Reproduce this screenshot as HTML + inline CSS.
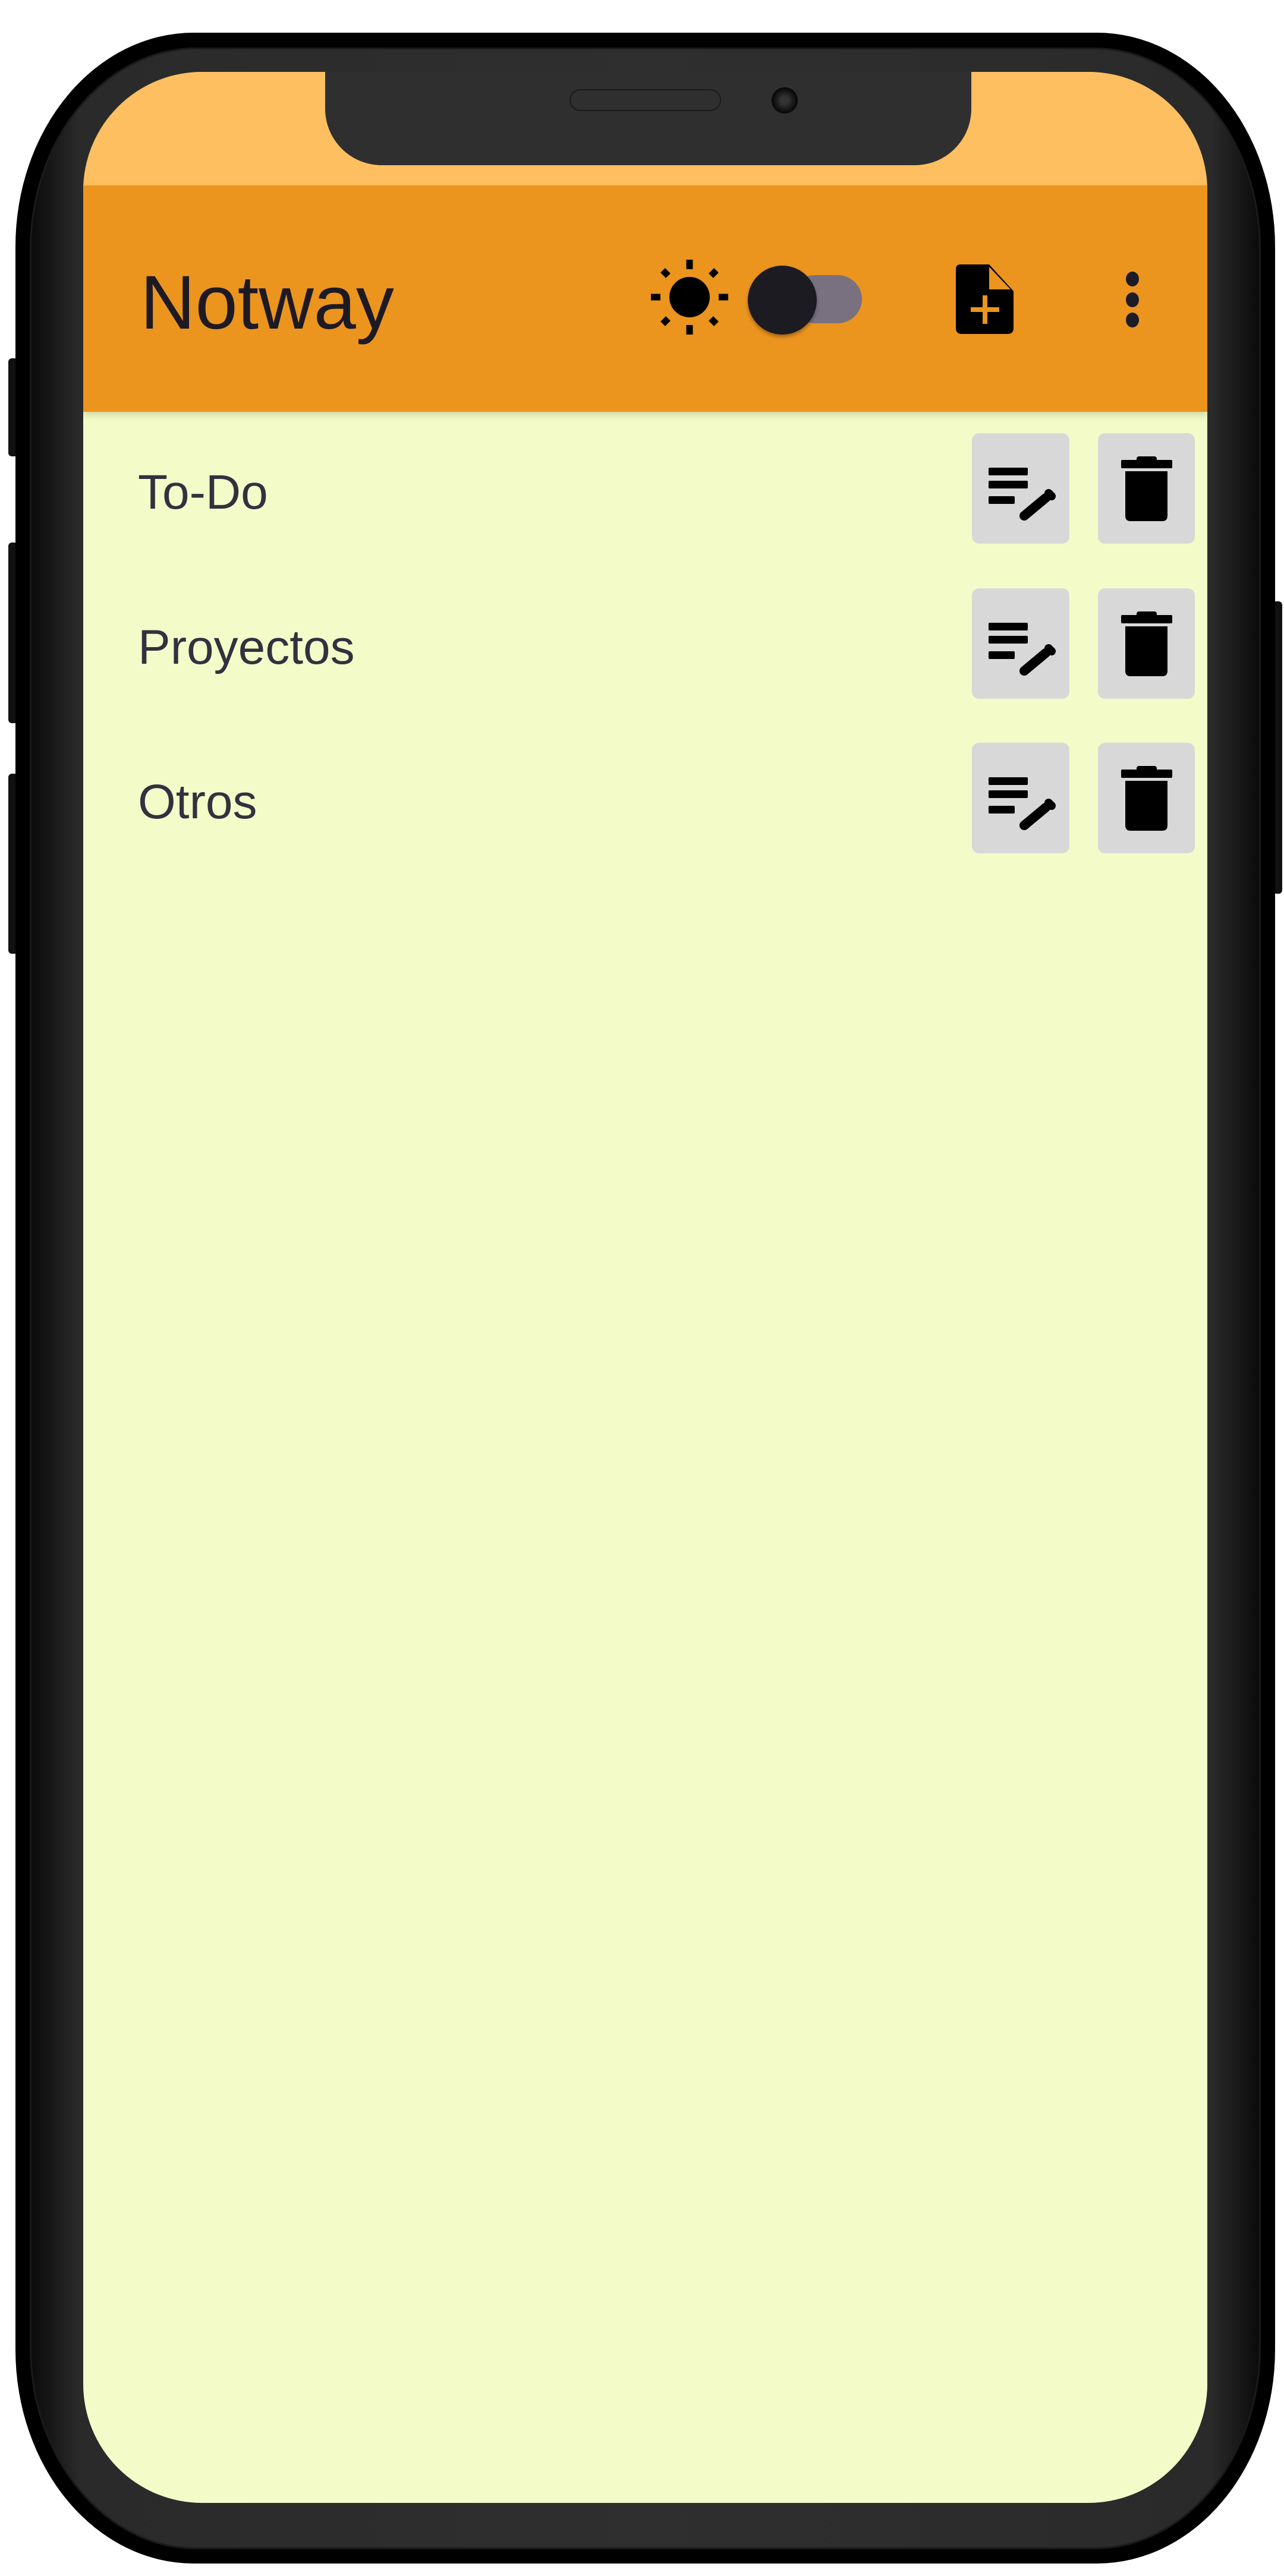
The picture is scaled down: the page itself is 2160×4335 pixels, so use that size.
<!DOCTYPE html>
<html><head><meta charset="utf-8"><style>
html,body{margin:0;padding:0;background:#fff;}
body{width:2160px;height:4335px;position:relative;overflow:hidden;font-family:"Liberation Sans",Arial,sans-serif;}
.abs{position:absolute;}
.phone{left:26px;top:55px;width:2119px;height:4259px;border-radius:300px / 360px;background:#000;}
.bezel{left:50px;top:80px;width:2071px;height:4210px;border-radius:280px / 340px;background:linear-gradient(90deg,#0a0a0a 0%,#2a2a2a 4%,#2f2f2f 50%,#2a2a2a 96%,#0a0a0a 100%);box-shadow:inset 0 0 0 3px #1a1a1a;}
.screen{left:140px;top:121px;width:1891px;height:4091px;border-radius:200px;background:#f3fcc9;overflow:hidden;}
.sb{left:0;top:0;width:1891px;height:191px;background:#fdbf5f;}
.hdr{left:0;top:191px;width:1891px;height:381px;background:#eb941e;box-shadow:0 6px 10px rgba(120,110,40,0.25);}
.notch{left:547px;top:121px;width:1087px;height:157px;background:#2f2f2f;border-radius:0 0 95px 95px;}
.sidebtn{background:#111;border-radius:6px;}
.row-t{left:232px;font-size:82px;color:#33313f;line-height:1;}
</style></head><body>
<div class="abs sidebtn" style="left:14px;top:603px;width:16px;height:165px"></div>
<div class="abs sidebtn" style="left:14px;top:913px;width:16px;height:304px"></div>
<div class="abs sidebtn" style="left:14px;top:1302px;width:16px;height:303px"></div>
<div class="abs sidebtn" style="left:2141px;top:1012px;width:16px;height:492px"></div>
<div class="abs phone"></div>
<div class="abs bezel"></div>
<div class="abs screen">
  <div class="abs sb"></div>
  <div class="abs hdr"></div>
</div>
<div class="abs notch"></div>
<div class="abs" style="left:958px;top:150px;width:251px;height:33px;border:2px solid #1a1a1a;border-radius:20px;"></div>
<div class="abs" style="left:1298px;top:147px;width:44px;height:44px;border-radius:50%;background:radial-gradient(circle,#333 20%,#050505 70%);"></div>

<div class="abs" style="left:236px;top:446px;font-size:128px;color:#1d1a24;line-height:1;">Notway</div>

<svg class="abs" style="left:1090px;top:430px" width="140" height="140" viewBox="1090 430 140 140">
  <circle cx="1160" cy="500" r="34" fill="#000"/>
  <g stroke="#000" stroke-width="11" stroke-linecap="butt">
    <line x1="1160" y1="437" x2="1160" y2="453"/>
    <line x1="1160" y1="547" x2="1160" y2="563"/>
    <line x1="1095" y1="500" x2="1111" y2="500"/>
    <line x1="1209" y1="500" x2="1225" y2="500"/>
    <line x1="1115" y1="455" x2="1124" y2="464"/>
    <line x1="1196" y1="536" x2="1205" y2="545"/>
    <line x1="1205" y1="455" x2="1196" y2="464"/>
    <line x1="1124" y1="536" x2="1115" y2="545"/>
  </g>
</svg>
<div class="abs" style="left:1330px;top:463px;width:120px;height:81px;border-radius:41px;background:#79717f;"></div>
<div class="abs" style="left:1258px;top:447px;width:116px;height:116px;border-radius:50%;background:#1c1b21;box-shadow:0 4px 6px rgba(0,0,0,0.3);"></div>

<svg class="abs" style="left:1600px;top:440px" width="120" height="130" viewBox="1600 440 120 130">
  <path d="M1616 445 H1664 L1705 490 V552 Q1705 562 1695 562 H1618 Q1608 562 1608 552 V453 Q1608 445 1616 445 Z" fill="#000"/>
  <path d="M1664 449 V487 H1700 Z" fill="#eb941e"/>
  <rect x="1653" y="497" width="8" height="48" fill="#eb941e"/>
  <rect x="1633" y="517" width="48" height="8" fill="#eb941e"/>
</svg>
<div class="abs" style="left:1894px;top:457px;width:22px;height:25px;border-radius:50%;background:#1c1b26"></div>
<div class="abs" style="left:1894px;top:492px;width:22px;height:25px;border-radius:50%;background:#1c1b26"></div>
<div class="abs" style="left:1894px;top:526px;width:22px;height:25px;border-radius:50%;background:#1c1b26"></div>

<div class="abs row-t" style="top:788px">To-Do</div>
<div class="abs row-t" style="top:1049px">Proyectos</div>
<div class="abs row-t" style="top:1309px">Otros</div>

<svg class="abs" style="left:0;top:0" width="2160" height="1500">
  <defs>
    <g id="ed">
      <rect x="1635" y="729" width="164" height="186" rx="12" fill="#d8d8d8"/>
      <rect x="1663" y="787" width="66" height="13" rx="2" fill="#000"/>
      <rect x="1663" y="809" width="66" height="13" rx="2" fill="#000"/>
      <rect x="1663" y="835" width="44" height="13" rx="2" fill="#000"/>
      <line x1="1723" y1="868" x2="1759" y2="838" stroke="#000" stroke-width="16" stroke-linecap="round"/>
      <line x1="1764" y1="830" x2="1769" y2="835" stroke="#000" stroke-width="14" stroke-linecap="round"/>
      <rect x="1847" y="729" width="163" height="186" rx="12" fill="#d8d8d8"/>
      <rect x="1886" y="774" width="86" height="14" rx="2" fill="#000"/>
      <rect x="1912" y="768" width="34" height="10" rx="4" fill="#000"/>
      <path d="M1893 793 H1964 V868 Q1964 877 1955 877 H1902 Q1893 877 1893 868 Z" fill="#000"/>
    </g>
  </defs>
  <use href="#ed"/>
  <use href="#ed" y="261"/>
  <use href="#ed" y="521"/>
</svg>
</body></html>
